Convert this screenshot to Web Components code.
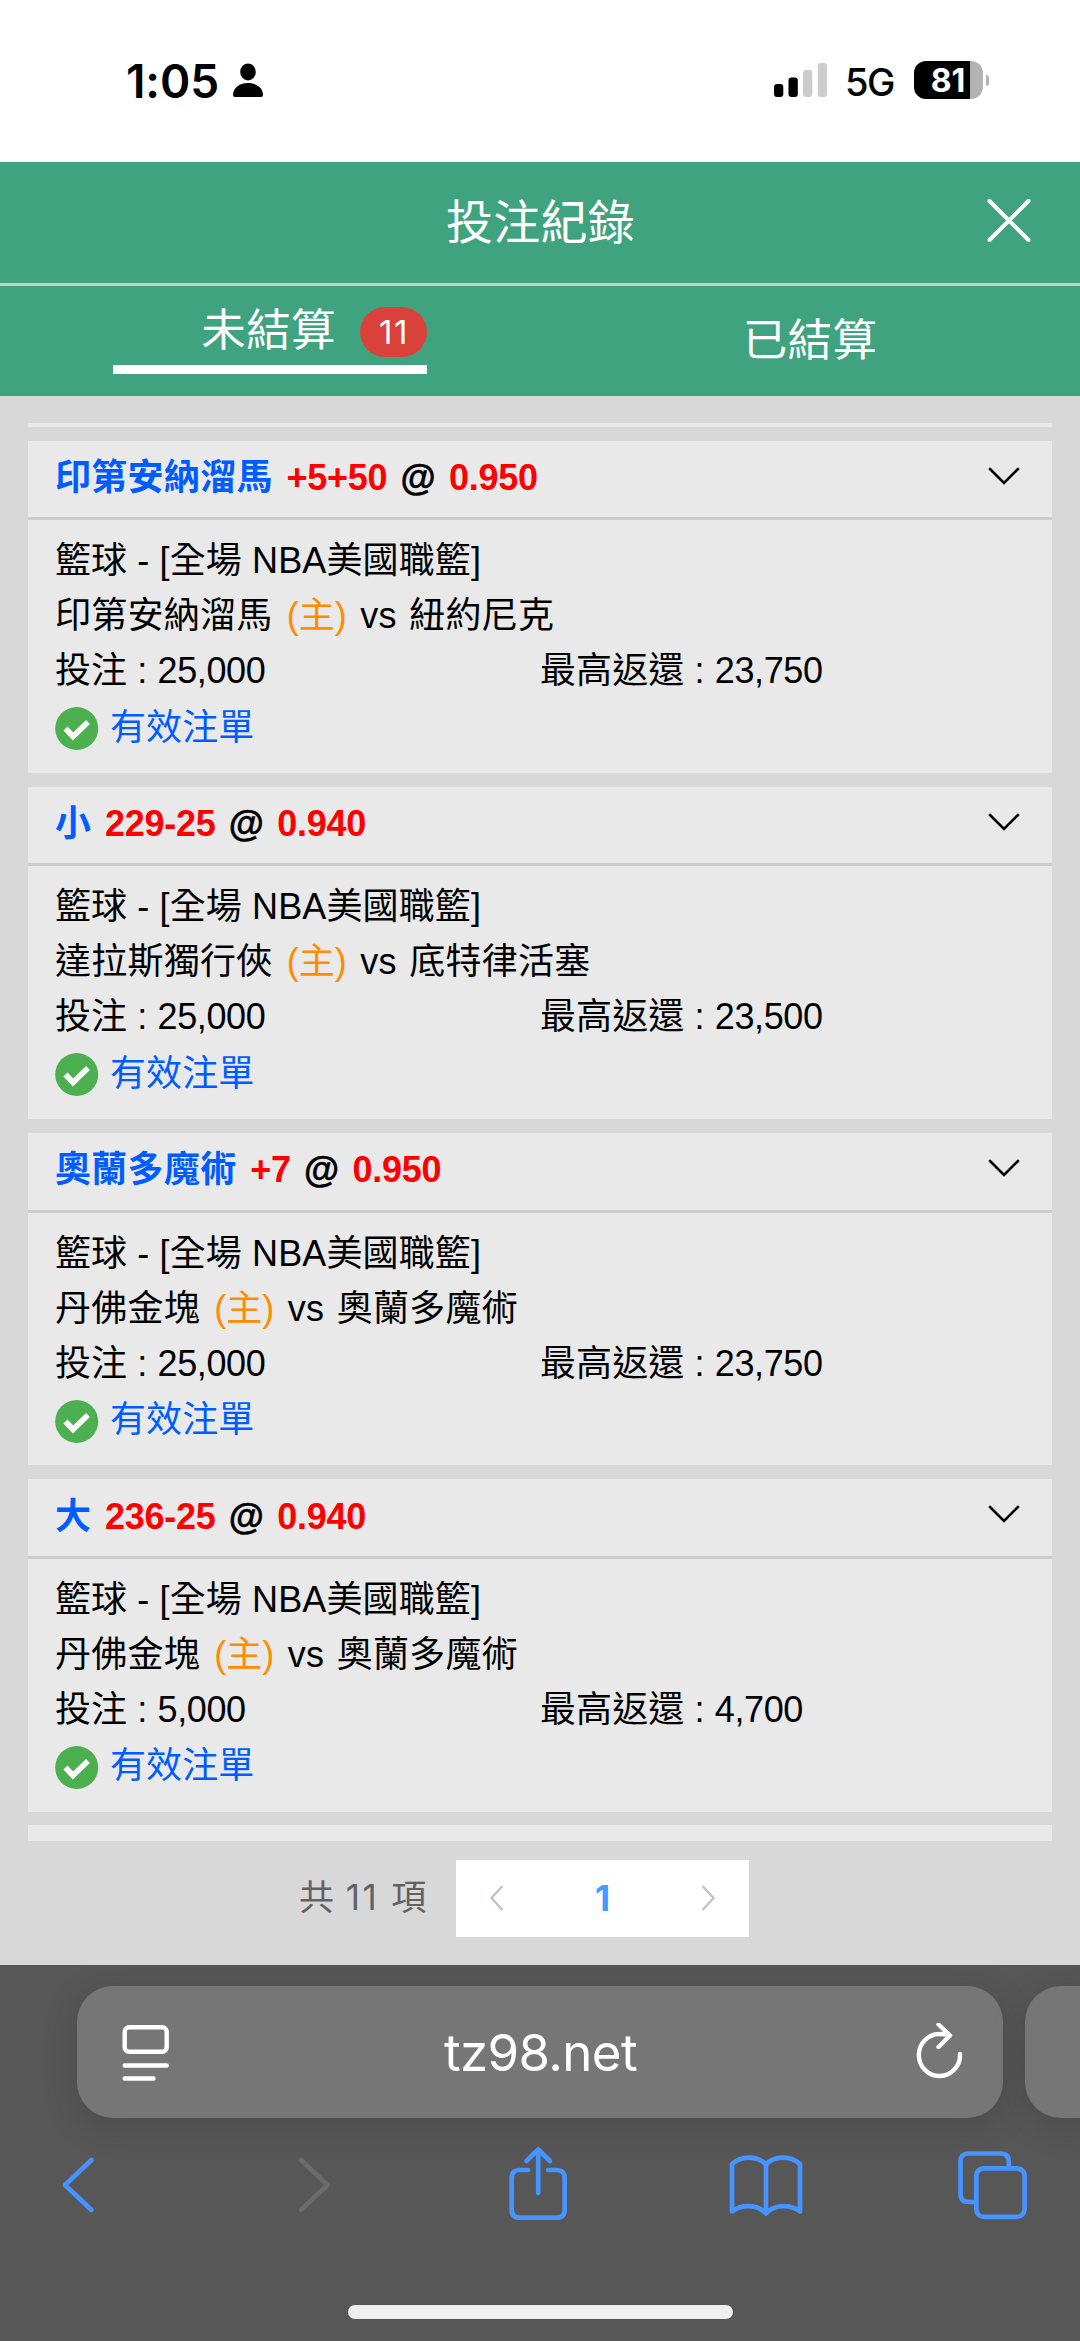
<!DOCTYPE html>
<html lang="zh-Hant">
<head>
<meta charset="utf-8">
<meta name="viewport" content="width=device-width">
<title>投注紀錄</title>
<style>
  html, body { margin: 0; padding: 0; background: #d8d8d8; }
  body { font-family: "Liberation Sans", "Noto Sans CJK TC", sans-serif; color: #000; }
</style>
</head>
<body>
<bet-app></bet-app>

<script>
const define = (name, html, setup) => {
  const template = document.createElement('template');
  template.innerHTML = html;
  customElements.define(name, class extends HTMLElement {
    connectedCallback() {
      if (this.shadowRoot) return;
      const root = this.attachShadow({ mode: 'open' });
      root.append(template.content.cloneNode(true));
      if (setup) setup(this, root);
    }
  });
};

define('status-bar', `
<style>
  :host { display: flex; box-sizing: border-box; height: 162px; background: #fff; padding: 60px 91px 0 126px; justify-content: space-between; align-items: flex-start; font-family: Inter, sans-serif; }
  .side { display: flex; align-items: center; height: 40px; }
  .time { font-size: 46px; font-weight: 600; line-height: 40px; letter-spacing: -.1px; padding-top: 1px; }
  .person { margin-left: 13px; }
  .net { font-size: 38px; font-weight: 500; line-height: 40px; margin-left: 17px; letter-spacing: -1.4px; padding-top: 3px; }
  .battery { display: flex; align-items: center; margin-left: 20px; }
  .cell { width: 69px; height: 38px; border-radius: 12px; background: linear-gradient(90deg, #000 56px, #b3b3b3 56px); color: #fff; font-size: 32px; font-weight: 700; line-height: 39px; text-align: center; letter-spacing: 0; box-sizing: border-box; padding-right: 1px; }
  .nub { width: 3px; height: 11px; margin-left: 3px; border-radius: 0 4px 4px 0; background: #b3b3b3; }
  svg { display: block; }
</style>
<div class="side">
  <span class="time">1:05</span>
  <svg class="person" width="32" height="36" viewBox="0 0 32 36"><ellipse cx="16" cy="10" rx="7.8" ry="8.4"/><path d="M1 33C1 25.500 8 21 16 21S31 25.500 31 33Q31 35 29 35H3Q1 35 1 33Z"/></svg>
</div>
<div class="side">
  <svg width="54" height="36" viewBox="0 0 54 36"><rect x="0" y="22" width="9.3" height="13" rx="3"/><rect x="14.5" y="15.5" width="9.3" height="19.5" rx="3"/><rect x="29" y="8" width="9.3" height="27" rx="3" fill="#ccc"/><rect x="43.7" y="1" width="9.3" height="34" rx="3" fill="#ccc"/></svg>
  <span class="net">5G</span>
  <div class="battery"><div class="cell">81</div><div class="nub"></div></div>
</div>`);

define('page-title', `
<style>
  :host { display: flex; box-sizing: border-box; height: 124px; background: #40a380; border-bottom: 3px solid #ccc; color: #fff; align-items: center; padding: 0 49px 3px 50px; }
  .pad { width: 44px; }
  h1 { flex: 1; margin: 0; padding-bottom: 5px; text-align: center; font: 400 47px/60px "Noto Sans CJK TC", sans-serif; letter-spacing: .2px; }
  svg { display: block; width: 44px; }
</style>
<div class="pad"></div>
<h1><slot></slot></h1>
<svg height="44" viewBox="0 0 44 44" fill="none" stroke="#fff" stroke-width="4" stroke-linecap="round"><path d="M2.5 2L41.5 41M41.500 2L2.5 41"/></svg>`);

define('tab-item', `
<style>
  :host { display: flex; flex: 1; justify-content: center; align-items: center; font: 400 44.500px/56px "Noto Sans CJK TC", sans-serif; letter-spacing: .4px; }
  .box { display: flex; align-items: center; padding-bottom: 8px; }
  :host([active]) { align-items: flex-start; padding-top: 13px; }
  :host([active]) .box { box-sizing: border-box; width: 314px; height: 75px; padding: 0; justify-content: flex-end; align-items: flex-start; border-bottom: 9px solid #fff; }
  .badge { display: none; }
  :host([count]) .badge { display: block; width: 67px; height: 50px; margin: 8px 0 0 24px; border-radius: 25px; background: #d9413a; font: 400 33px/50px Inter, sans-serif; letter-spacing: 1.500px; text-indent: 1px; text-align: center; }
</style>
<div class="box"><slot></slot><span class="badge"></span></div>`,
(host, root) => { root.querySelector('.badge').textContent = host.getAttribute('count') || ''; });

define('tab-bar', `
<style>:host { display: flex; height: 110px; background: #40a380; color: #fff; }</style>
<slot></slot>`);

define('bet-card', `
<style>
  :host { display: block; box-sizing: border-box; flex: none; height: 332.300px; background: #e9e9e9; font-size: 36px; letter-spacing: .12px; }
  header { display: flex; box-sizing: border-box; height: 79.500px; border-bottom: 3px solid #ccc; align-items: center; justify-content: space-between; padding: 0 32px 2px 27.300px; font-weight: 700; line-height: 56px; }
  .pick { color: #005cff; margin-right: 3.500px; letter-spacing: .3px; }
  .odds { color: #f00; letter-spacing: -.25px; }
  .at { margin: 0 -7px; -webkit-text-stroke: .5px #000; }
  .rows { padding: 13px 27.300px 0; line-height: 55px; }
  .row { display: flex; height: 55px; white-space: pre; }
  .row > span { flex: 1; }
  .num { letter-spacing: -.4px; }
  .a, .b { letter-spacing: .25px; }
  .home { color: #ff8c00; margin: 0 3.200px 0 4px; }
  .vs { margin: 0 2.500px 0 0; }
  .state { display: flex; align-items: center; height: 60px; color: #005cff; gap: 11px; }
  .state span { line-height: 56px; padding-bottom: 1px; }
  svg { display: block; }
  header svg { margin-bottom: 5px; }
</style>
<header>
  <div><span class="pick"></span> <span class="odds line"></span> <span class="at">&nbsp;@&nbsp;</span> <span class="odds price"></span></div>
  <svg width="32" height="18" viewBox="0 0 32 18" fill="none" stroke="#000" stroke-width="2.6" stroke-linecap="round"><path d="M2 2L16 16L30 2"/></svg>
</header>
<div class="rows">
  <div class="row league"></div>
  <div class="row"><div><span class="a"></span> <span class="home">(主)</span> <span class="vs">vs</span> <span class="b"></span></div></div>
  <div class="row"><span>投注 : <span class="num stake"></span></span><span>最高返還 : <span class="num max"></span></span></div>
  <div class="state">
    <svg width="44" height="44" viewBox="0 0 44 44"><circle cx="21.700" cy="22.500" r="21.500" fill="#4caf50"/><path d="M10.500 22.500L18 30.500L33 16" fill="none" stroke="#fff" stroke-width="5.600"/></svg>
    <span>有效注單</span>
  </div>
</div>`,
(host, root) => {
  const put = (sel, text) => { root.querySelector(sel).textContent = text; };
  const d = host.dataset;
  put('.pick', d.pick || ''); put('.line', d.line || ''); put('.price', d.price || '');
  put('.league', '籃球 - [全場 NBA美國職籃]');
  put('.a', d.home || ''); put('.b', d.away || '');
  put('.stake', d.stake || ''); put('.max', d.max || '');
});

define('card-edge', `
<style>:host { display: block; flex: none; background: #e9e9e9; height: 4px; } :host([bottom]) { height: 30px; }</style>`);

define('bet-list', `
<style>:host { display: flex; flex-direction: column; gap: 13.850px; margin: 27px 27.700px 0; height: 1418px; overflow: hidden; }</style>
<slot></slot>`);

define('page-switch', `
<style>
  :host { display: flex; height: 77px; margin: 19px 0 28px; padding-left: 299px; gap: 28px; align-items: center; font: 400 35px/74px Inter, "Noto Sans CJK TC", sans-serif; color: #606266; }
  .total { width: 129px; height: 77px; white-space: nowrap; word-spacing: 2px; }
  .count { letter-spacing: 2.500px; }
  .box { display: flex; width: 293px; box-sizing: border-box; height: 77px; padding: 0 34px 2px; background: #fff; align-items: center; justify-content: space-between; }
  b { color: #409eff; font-weight: 700; }
  svg { display: block; fill: none; stroke: #c0c4cc; stroke-width: 2.400; }
</style>
<span class="total">共 <span class="count">11</span> 項</span>
<div class="box">
  <svg width="14" height="26" viewBox="0 0 14 26"><path d="M12.500 1L1.500 13L12.500 25"/></svg>
  <b>1</b>
  <svg width="14" height="26" viewBox="0 0 14 26"><path d="M1.500 1L12.500 13L1.500 25"/></svg>
</div>`);

define('address-bar', `
<style>
  :host { display: flex; gap: 22px; padding: 21px 0 0 77px; }
  .pill { flex: none; box-sizing: border-box; width: 926px; height: 132px; border-radius: 36px; background: #767676; box-shadow: 0 8px 36px rgba(0,0,0,.15); display: flex; align-items: center; justify-content: space-between; padding: 0 40px 0 45px; color: #fff; font: 400 51px/64px Inter, sans-serif; }
  svg { display: block; fill: none; stroke: #fff; stroke-width: 4.400; stroke-linecap: round; stroke-linejoin: round; }
  .url { letter-spacing: -.65px; padding: 1px 4px 0 0; }
</style>
<div class="pill">
  <svg width="48" height="58" viewBox="0 0 48 58"><rect x="2.700" y="4.200" width="42" height="24.500" rx="4.500"/><path d="M2.700 42.500H44.700M2.700 55.500H31.500"/></svg>
  <span class="url">tz98.net</span>
  <svg width="48" height="58" viewBox="0 0 48 58"><path d="M45 31A20.600 21 0 1 1 24.500 11Q30 11 34 12.200M23.500 1.500L35 12.500L23.500 24"/></svg>
</div>
<div class="pill"></div>`);

define('tool-bar', `
<style>
  :host { display: flex; align-items: flex-start; padding: 25px 51px 0 60px; }
  svg { display: block; flex: none; fill: none; stroke: #4793ff; stroke-width: 4.700; stroke-linecap: round; stroke-linejoin: round; }
  .forward { margin-left: 200px; stroke: #6b6b6b; }
  .share { margin-left: 175px; }
  .book { margin-left: 157.500px; }
  .tabs { margin-left: 151.500px; }
</style>
<svg width="36" height="80" viewBox="60 2143 36 80"><path d="M91.500 2160L65 2185L91.500 2210"/></svg>
<svg class="forward" width="36" height="80" viewBox="296 2143 36 80"><path d="M301 2160L327.500 2185L301 2210"/></svg>
<svg class="share" width="62" height="80" viewBox="507 2143 62 80"><path d="M528 2170H520Q511.700 2170 511.700 2178V2209.500Q511.700 2217.700 520 2217.700H556.500Q564.700 2217.700 564.700 2209.500V2178Q564.700 2170 556.500 2170H548M538.200 2193V2150M526.500 2161L538.200 2149.500L549.900 2161"/></svg>
<svg class="book" width="78" height="80" viewBox="726.500 2143 78 80"><path d="M765.500 2164.500C757 2155.500 741 2155.500 731.500 2164V2211.500C741 2204 757 2204 765.500 2213.500C774 2204 790 2204 799.500 2211.500V2164C790 2155.500 774 2155.500 765.500 2164.500V2213.500"/></svg>
<svg class="tabs" width="73" height="80" viewBox="956 2143 73 80"><path d="M974 2202H968.500Q960.500 2202 960.500 2194V2161.500Q960.500 2153.500 968.500 2153.500H1000.500Q1008.800 2153.500 1008.800 2161.500V2166"/><rect x="976.300" y="2168.300" width="48.300" height="48.500" rx="7.500"/></svg>`);

define('browser-chrome', `
<style>
  :host { display: flex; flex-direction: column; height: 376px; background: #575757; overflow: hidden; }
  .home { width: 385px; height: 14px; border-radius: 7px; background: #efefef; margin: 82px auto 0; }
</style>
<address-bar></address-bar>
<tool-bar></tool-bar>
<div class="home"></div>`);

define('bet-app', `
<style>:host { display: flex; flex-direction: column; width: 1080px; height: 2341px; overflow: hidden; background: #d8d8d8; }</style>
<status-bar></status-bar>
<page-title>投注紀錄</page-title>
<tab-bar>
  <tab-item active count="11">未結算</tab-item>
  <tab-item>已結算</tab-item>
</tab-bar>
<bet-list>
  <card-edge></card-edge>
  <bet-card data-pick="印第安納溜馬" data-line="+5+50" data-price="0.950" data-home="印第安納溜馬" data-away="紐約尼克" data-stake="25,000" data-max="23,750"></bet-card>
  <bet-card data-pick="小" data-line="229-25" data-price="0.940" data-home="達拉斯獨行俠" data-away="底特律活塞" data-stake="25,000" data-max="23,500"></bet-card>
  <bet-card data-pick="奧蘭多魔術" data-line="+7" data-price="0.950" data-home="丹佛金塊" data-away="奧蘭多魔術" data-stake="25,000" data-max="23,750"></bet-card>
  <bet-card data-pick="大" data-line="236-25" data-price="0.940" data-home="丹佛金塊" data-away="奧蘭多魔術" data-stake="5,000" data-max="4,700"></bet-card>
  <card-edge bottom></card-edge>
</bet-list>
<page-switch></page-switch>
<browser-chrome></browser-chrome>`);
</script>
</body>
</html>
